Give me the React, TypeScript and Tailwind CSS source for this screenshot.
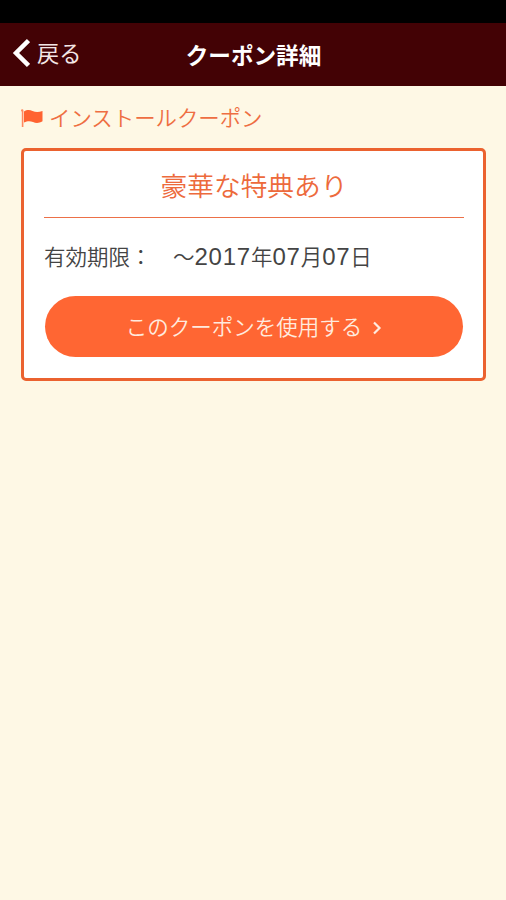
function Digits({ children }: { children: string }) {
  return (
    <span className="font-['Liberation_Sans','Noto_Sans_CJK_JP',sans-serif] text-[24px] leading-none tracking-[0.75px]">
      {children}
    </span>
  );
}

function Header() {
  return (
    <header className="grid h-[63px] grid-cols-[1fr_auto_1fr] items-center bg-[#430205] text-white">
      <a className="flex items-center pl-3">
        <svg className="-mt-1 h-[30px] w-[18px]" viewBox="0 0 18 30" fill="none">
          <path d="M16.5 2.5 4 15l12.5 12.5" stroke="currentColor" strokeWidth="4.5" />
        </svg>
        <span className="-mt-1.5 ml-[7px] text-[22.2px] leading-8 text-[#f3e6e6]">戻る</span>
      </a>
      <h1 className="pl-px text-[22.6px] leading-8 font-bold">クーポン詳細</h1>
    </header>
  );
}

function FlagIcon() {
  return (
    <svg className="h-[18px] w-[22px] text-[#ff6331]" viewBox="0 0 22 18" fill="currentColor">
      <path d="M0 1.5a1.2 1.2 0 0 1 2.4 0V18H.8V2.6A1.2 1.2 0 0 1 0 1.5Z" opacity=".75" />
      <path d="M3 2.5C6 .6 8.7.7 11.5 2c3 1.3 6 1.4 10 0v10.3c-3.5 2-6.5 2-9.5.7-3-1.2-5.5-1.2-9 .6Z" />
    </svg>
  );
}

export default function App() {
  return (
    <div className="min-h-screen bg-[#fef8e5] font-['Noto_Sans_CJK_JP',sans-serif]">
      <div className="h-[23px] bg-black" />
      <Header />
      <main className="px-[21px] pt-4">
        <h2 className="flex h-8 items-center text-[21.4px] font-[350] text-[#ee6e42]">
          <FlagIcon />
          <span className="-mt-0.5 ml-1.5">インストールクーポン</span>
        </h2>
        <section className="mt-3.5 h-[233px] w-[465px] rounded-[5px] border-[3px] border-[#eb622f] bg-white px-5">
          <h3 className="flex h-[66px] w-[420px] items-center justify-center pt-0.5 text-[26.7px] font-[350] text-[#ed6a3c]">
            豪華な特典あり
          </h3>
          <div className="h-px w-[420px] bg-[#ec7048]" />
          <p className="mt-[22px] h-8 text-[21.5px] leading-8 font-[350] whitespace-nowrap text-[#444]">
            有効期限：　～<Digits>2017</Digits>年<Digits>07</Digits>月<Digits>07</Digits>日
          </p>
          <button className="mt-6 ml-px flex h-[61px] w-[418px] items-center justify-center rounded-full bg-[#ff6633] text-[21.5px] font-[350] text-[#ffeade]">
            <span>このクーポンを使用する</span>
            <svg className="mt-0.5 ml-2.5 h-3.5 w-2.5" viewBox="0 0 10 14" fill="none">
              <path d="m2 1.5 5.5 5.5L2 12.5" stroke="currentColor" strokeWidth="2.2" />
            </svg>
          </button>
        </section>
      </main>
    </div>
  );
}
